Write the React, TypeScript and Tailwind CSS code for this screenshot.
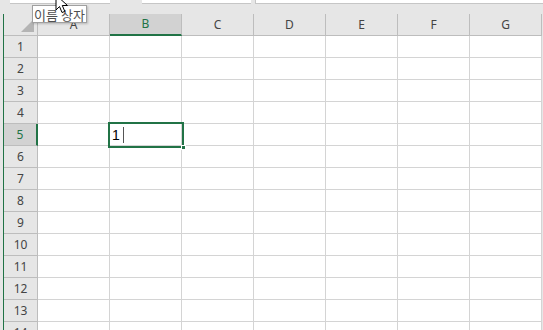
import React from 'react';

const cols = ['A', 'B', 'C', 'D', 'E', 'F', 'G'];
const rows = Array.from({ length: 14 }, (_, i) => i + 1);

export default function App() {
  return (
    <div className="relative w-[543px] h-[330px] overflow-hidden bg-[#e6e6e6] font-['Noto_Sans','Liberation_Sans',sans-serif] text-[12px]">
      {/* name box / formula bar strip */}
      <div className="flex h-[14px] items-start">
        <div className="ml-[10px] w-[100px] h-[4px] bg-white border-b border-[#c6c6c6]" />
        <div className="ml-[32px] w-[109px] h-[4px] bg-white border-b border-[#c6c6c6]" />
        <div className="ml-[4px] flex-1 h-[4px] bg-white border-b border-l border-[#c6c6c6]" />
      </div>

      <div className="flex">
        <div className="w-[3px] shrink-0" />
        <div className="w-px shrink-0 bg-[#217346]" />
        <div className="relative flex-1">
          {/* column headers */}
          <div className="flex h-[22px]">
            <div className="relative w-[34px] shrink-0 border-r border-b border-[#bdbdbd] bg-[#e6e6e6]">
              <div className="absolute right-[3px] bottom-[3px] w-0 h-0 border-l-[13px] border-l-transparent border-b-[13px] border-b-[#b4b4b4]" />
            </div>
            {cols.map((c) =>
              c === 'B' ? (
                <div
                  key={c}
                  className="w-[72px] shrink-0 flex items-center justify-center border-r border-[#bdbdbd] border-b-2 border-b-[#217346] bg-[#d2d2d2] text-[#217346] text-[12px]"
                >
                  {c}
                </div>
              ) : (
                <div
                  key={c}
                  className="w-[72px] shrink-0 flex items-center justify-center border-r border-b border-[#bdbdbd] bg-[#e6e6e6] text-[#444] text-[12px]"
                >
                  {c}
                </div>
              )
            )}
          </div>

          {rows.map((r) => (
            <div key={r} className="flex h-[22px]">
              {r === 5 ? (
                <div className="w-[34px] shrink-0 flex items-center justify-center pt-px border-r-2 border-r-[#217346] border-b border-[#bdbdbd] bg-[#d2d2d2] text-[#217346] text-[12px]">
                  {r}
                </div>
              ) : (
                <div className="w-[34px] shrink-0 flex items-center justify-center pt-px border-r border-b border-[#bdbdbd] bg-[#e6e6e6] text-[#444] text-[12px]">
                  {r}
                </div>
              )}
              {cols.map((c) => (
                <div key={c} className="w-[72px] shrink-0 bg-white border-r border-b border-[#d4d4d4]" />
              ))}
            </div>
          ))}

          {/* active cell B5 in edit mode */}
          <div className="absolute left-[104px] top-[108px] w-[76px] h-[26px] border-2 border-[#217346] flex items-center pl-[2px]">
            <span className="text-[14px] leading-none text-black font-['Liberation_Sans',sans-serif]">1</span>
            <span className="ml-[3px] w-px h-[16px] bg-[#555]" />
            <div className="absolute right-[-4px] bottom-[-4px] w-[5px] h-[5px] bg-[#217346] border border-white" />
          </div>
        </div>
      </div>

      {/* tooltip */}
      <div className="absolute left-[32px] top-[5px] w-[55px] h-[18px] flex items-center justify-center bg-white border border-[#a0a0a0] shadow-[1px_1px_2px_rgba(0,0,0,0.2)] text-[13px] text-[#505050] font-['Noto_Sans_CJK_KR',sans-serif] leading-none">
        이름 상자
      </div>

      {/* mouse pointer */}
      <svg className="absolute left-[55px] top-[-6px]" width="15" height="21" viewBox="0 0 15 21">
        <path d="M1 1 L1 16 L4.5 12.5 L7 18.5 L9.8 17.4 L7.3 11.5 L12.5 11.5 Z" fill="white" stroke="black" strokeWidth="1" strokeLinejoin="miter" />
      </svg>
    </div>
  );
}
